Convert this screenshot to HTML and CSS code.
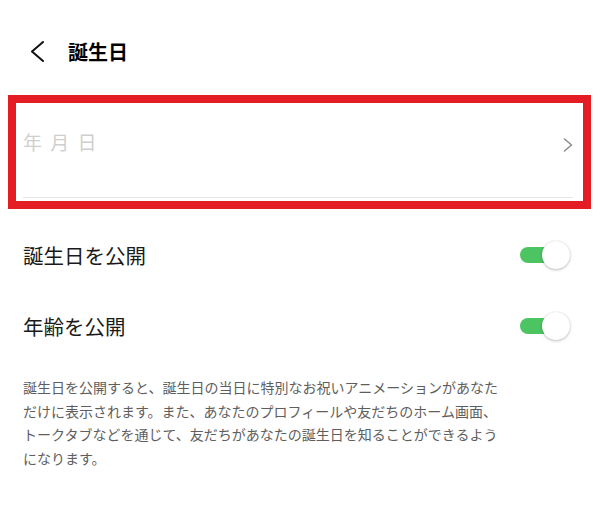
FILE: index.html
```html
<!DOCTYPE html>
<html lang="ja">
<head>
<meta charset="utf-8">
<link rel="stylesheet" href="styles.css">
</head>
<body>
<header class="header">
  <svg class="back" width="14" height="22" viewBox="0 0 14 22"><path d="M13 1 L2 10.5 L13 20" fill="none" stroke="#111" stroke-width="2" stroke-linecap="round" stroke-linejoin="round"/></svg>
  <h1 class="title">誕生日</h1>
</header>
<section class="datebox">
  <div class="daterow">
    <span class="placeholder">年 月 日</span>
    <svg class="chev" width="10" height="14" viewBox="0 0 10 14"><path d="M1.5 1 L8.5 7 L1.5 13" fill="none" stroke="#8a8a8a" stroke-width="1.5" stroke-linecap="round" stroke-linejoin="round"/></svg>
  </div>
</section>
<div class="setting">
  <span class="label">誕生日を公開</span>
  <span class="toggle"><span class="track"></span><span class="knob"></span></span>
</div>
<div class="setting">
  <span class="label">年齢を公開</span>
  <span class="toggle"><span class="track"></span><span class="knob"></span></span>
</div>
<p class="desc">誕生日を公開すると、誕生日の当日に特別なお祝いアニメーションがあなただけに表示されます。また、あなたのプロフィールや友だちのホーム画面、トークタブなどを通じて、友だちがあなたの誕生日を知ることができるようになります。</p>
</body>
</html>
```
FILE: styles.css
```css
* { box-sizing: border-box; }
html, body { margin: 0; padding: 0; background: #fff; }
body {
  width: 600px;
  height: 516px;
  overflow: hidden;
  font-family: "Noto Sans CJK JP", "Noto Sans", sans-serif;
  color: #111;
}
.header {
  display: flex;
  align-items: center;
  height: 40px;
  margin-top: 32px;
  padding-left: 30px;
}
.back { display: block; flex: none; }
.title {
  margin: 0 0 0 24px;
  font-size: 20px;
  font-weight: 700;
  line-height: 28px;
  color: #000;
}
.datebox {
  margin: 23px 9px 0 8px;
  height: 114px;
  border: 8px solid #e41d25;
  background: #fff;
}
.daterow {
  display: flex;
  align-items: flex-start;
  justify-content: space-between;
  margin: 0 10px 0 7px;
  padding-top: 25px;
  height: 95px;
  border-bottom: 1px solid #e6e6e6;
}
.placeholder {
  font-size: 19px;
  line-height: 28px;
  letter-spacing: 2px;
  color: #cfcfcf;
}
.chev { display: block; margin-top: 10px; }
.setting {
  display: flex;
  align-items: center;
  justify-content: space-between;
  height: 71px;
  padding: 0 30px 0 23px;
}
.setting:first-of-type { margin-top: 10px; }
.label {
  font-size: 20.5px;
  line-height: 30px;
  color: #1a1a1a;
}
.toggle {
  position: relative;
  display: block;
  width: 50px;
  height: 28px;
}
.track {
  position: absolute;
  left: 0;
  top: 6px;
  width: 42px;
  height: 16px;
  border-radius: 8px;
  background: #4cc462;
}
.knob {
  position: absolute;
  right: 0;
  top: 0;
  width: 28px;
  height: 28px;
  border-radius: 50%;
  background: #fff;
  box-shadow: 0 1px 3px rgba(0,0,0,0.25), 0 0 1px rgba(0,0,0,0.15);
}
.desc {
  margin: 15px 0 0 0;
  padding: 0 90px 0 23px;
  font-size: 14px;
  line-height: 23.5px;
  color: #5e5e5e;
}
```
